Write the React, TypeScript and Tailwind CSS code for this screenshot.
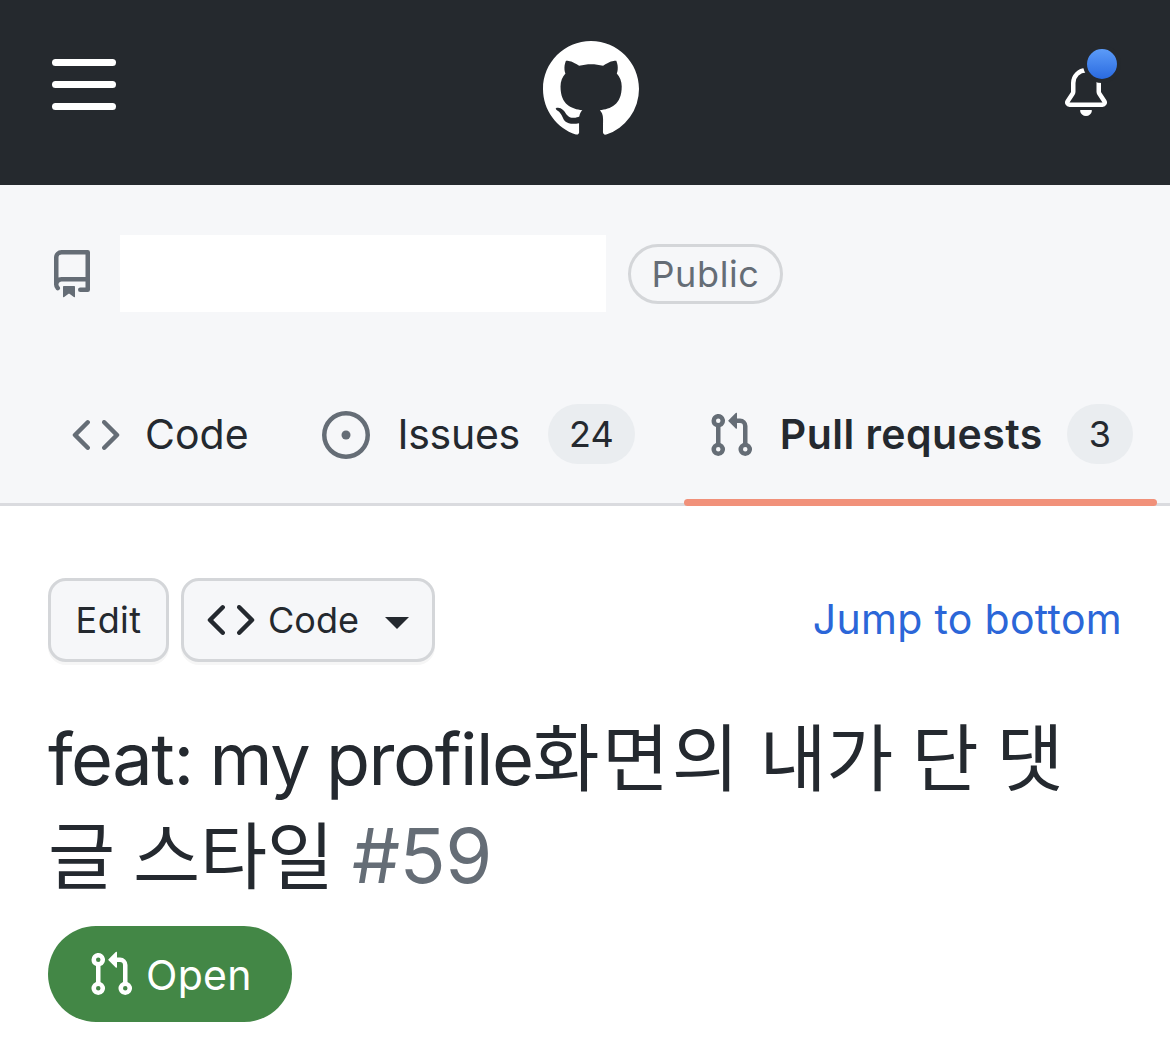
import React from 'react';

const font = { fontFamily: 'Inter, "Noto Sans CJK KR", sans-serif' };

function CodeIcon({ className }: { className: string }) {
  return (
    <svg viewBox="0 0 16 16" fill="currentColor" className={className}>
      <path d="m11.28 3.22 4.25 4.25a.75.75 0 0 1 0 1.06l-4.25 4.25a.749.749 0 0 1-1.275-.326.749.749 0 0 1 .215-.734L13.94 8l-3.72-3.72a.749.749 0 0 1 .326-1.275.749.749 0 0 1 .734.215Zm-6.56 0a.751.751 0 0 1 1.042.018.751.751 0 0 1 .018 1.042L2.06 8l3.72 3.72a.749.749 0 0 1-.326 1.275.749.749 0 0 1-.734-.215L.47 8.53a.75.75 0 0 1 0-1.06Z" />
    </svg>
  );
}

function PullIcon({ className }: { className: string }) {
  return (
    <svg viewBox="0 0 16 16" fill="currentColor" className={className}>
      <path d="M1.5 3.25a2.25 2.25 0 1 1 3 2.122v5.256a2.251 2.251 0 1 1-1.5 0V5.372A2.25 2.25 0 0 1 1.5 3.25Zm5.677-.177L9.573.677A.25.25 0 0 1 10 .854V2.5h1A2.5 2.5 0 0 1 13.5 5v5.628a2.251 2.251 0 1 1-1.5 0V5a1 1 0 0 0-1-1h-1v1.646a.25.25 0 0 1-.427.177L7.177 3.427a.25.25 0 0 1 0-.354ZM3.75 2.5a.75.75 0 1 0 0 1.5.75.75 0 0 0 0-1.5Zm0 9.5a.75.75 0 1 0 0 1.5.75.75 0 0 0 0-1.5Zm8.25.75a.75.75 0 1 0 1.5 0 .75.75 0 0 0-1.5 0Z" />
    </svg>
  );
}

function Header() {
  return (
    <header className="flex h-[185px] items-center justify-between bg-[#25292e] pl-[52px] pr-[60px]">
      <div className="flex w-[64px] flex-col gap-[15px] -mt-[16px]">
        <div className="h-[7px] rounded-full bg-white" />
        <div className="h-[7px] rounded-full bg-white" />
        <div className="h-[7px] rounded-full bg-white" />
      </div>
      <svg viewBox="0 0 16 16" fill="#ffffff" className="h-[96px] w-[96px] -mt-[7px]">
        <path d="M8 0C3.58 0 0 3.58 0 8c0 3.54 2.29 6.53 5.47 7.59.4.07.55-.17.55-.38 0-.19-.01-.82-.01-1.49-2.01.37-2.53-.49-2.69-.94-.09-.23-.48-.94-.82-1.13-.28-.15-.68-.52-.01-.53.63-.01 1.08.58 1.23.82.72 1.21 1.87.87 2.33.66.07-.52.28-.87.51-1.07-1.78-.2-3.64-.89-3.64-3.95 0-.87.31-1.59.82-2.15-.08-.2-.36-1.02.08-2.12 0 0 .67-.21 2.2.82.64-.18 1.32-.27 2-.27.68 0 1.36.09 2 .27 1.53-1.04 2.2-.82 2.2-.82.44 1.1.16 1.92.08 2.12.51.56.82 1.27.82 2.15 0 3.07-1.87 3.75-3.65 3.95.29.25.54.73.54 1.48 0 1.07-.01 1.93-.01 2.2 0 .21.15.46.55.38A8.013 8.013 0 0016 8c0-4.42-3.58-8-8-8z" />
      </svg>
      <div className="relative h-[48px] w-[44px] -mt-[1px]">
        <svg viewBox="0 0 16 16" fill="#ffffff" className="-ml-[4px] h-[48px] w-[48px]">
          <path d="M8 16a2 2 0 0 0 1.985-1.75c.017-.137-.097-.25-.235-.25h-3.5c-.138 0-.252.113-.235.25A2 2 0 0 0 8 16ZM3 5a5 5 0 0 1 10 0v2.947c0 .05.015.098.042.139l1.703 2.555A1.519 1.519 0 0 1 13.482 13H2.518a1.516 1.516 0 0 1-1.263-2.36l1.703-2.554A.255.255 0 0 0 3 7.947Zm5-3.5A3.5 3.5 0 0 0 4.5 5v2.947c0 .346-.102.683-.294.97l-1.703 2.556a.017.017 0 0 0-.003.01l.001.006c0 .002.002.004.004.006l.006.004.007.001h10.964l.007-.001.006-.004.004-.006.001-.007a.017.017 0 0 0-.003-.01l-1.703-2.554a1.745 1.745 0 0 1-.294-.97V5A3.5 3.5 0 0 0 8 1.5Z" />
        </svg>
        <div className="absolute -top-[23px] left-[17px] h-[38px] w-[38px] rounded-full border-4 border-[#25292e] bg-gradient-to-b from-[#5c9bf8] to-[#2a6ae0]" />
      </div>
    </header>
  );
}

function RepoBar() {
  return (
    <div className="border-b-[3px] border-[#dadbdf] bg-[#f6f7f9]">
      <div className="flex items-center pl-[48px] pt-[50px]">
        <svg viewBox="0 0 16 16" fill="currentColor" className="h-[48px] w-[48px] text-[#656d76]">
          <path d="M2 2.5A2.5 2.5 0 0 1 4.5 0h8.75a.75.75 0 0 1 .75.75v12.5a.75.75 0 0 1-.75.75h-2.5a.75.75 0 0 1 0-1.5h1.75v-2h-8a1 1 0 0 0-.714 1.7.75.75 0 1 1-1.072 1.05A2.495 2.495 0 0 1 2 11.5Zm10.5-1h-8a1 1 0 0 0-1 1v6.708A2.486 2.486 0 0 1 4.5 9h8ZM5 12.25a.25.25 0 0 1 .25-.25h3.5a.25.25 0 0 1 .25.25v3.25a.25.25 0 0 1-.4.2l-1.45-1.087a.249.249 0 0 0-.3 0L5.4 15.7a.25.25 0 0 1-.4-.2Z" />
        </svg>
        <div className="ml-[24px] h-[77px] w-[486px] bg-white" />
        <span className="ml-[22px] flex h-[60px] w-[155px] items-center justify-center rounded-full border-[3px] border-[#d4d6d9] text-[36px] tracking-[0.6px] text-[#656d76]">
          Public
        </span>
      </div>
      <nav className="mt-[62px] flex h-[129px] pl-[72px]">
        <div className="flex h-[122px] items-center">
          <CodeIcon className="h-[48px] w-[48px] text-[#656d76]" />
          <span className="ml-[25px] text-[41px] text-[#24292f]">Code</span>
        </div>
        <div className="ml-[73px] flex h-[122px] items-center">
          <svg viewBox="0 0 16 16" fill="currentColor" className="h-[48px] w-[48px] text-[#656d76]">
            <path d="M8 9.5a1.5 1.5 0 1 0 0-3 1.5 1.5 0 0 0 0 3Z" />
            <path d="M8 0a8 8 0 1 1 0 16A8 8 0 0 1 8 0ZM1.5 8a6.5 6.5 0 1 0 13 0 6.5 6.5 0 0 0-13 0Z" />
          </svg>
          <span className="ml-[28px] text-[41px] tracking-[-0.3px] text-[#24292f]">Issues</span>
          <span className="ml-[28px] -mt-[2px] flex h-[60px] w-[87px] items-center justify-center rounded-full bg-[#eaedf0] text-[36px] text-[#24292f]">
            24
          </span>
        </div>
        <div className="relative ml-[72px] flex h-[122px] items-center">
          <PullIcon className="h-[48px] w-[48px] text-[#656d76]" />
          <span className="ml-[25px] text-[41px] font-semibold tracking-[0.45px] text-[#24292f]">Pull requests</span>
          <span className="ml-[24px] -mt-[2px] flex h-[60px] w-[66px] items-center justify-center rounded-full bg-[#eaedf0] text-[36px] text-[#24292f]">
            3
          </span>
          <div className="absolute -left-[23px] -bottom-[10px] h-[7px] w-[473px] rounded-[4px] bg-[#f1917a]" />
        </div>
      </nav>
    </div>
  );
}

function Actions() {
  return (
    <div className="flex items-center justify-between pl-[48px] pr-[48px] pt-[72px]">
      <div className="flex gap-[12px]">
        <button className="flex h-[84px] w-[121px] items-center justify-center rounded-[18px] border-[3px] border-[#d4d6d9] bg-[#f6f7f9] text-[36px] tracking-[0.4px] text-[#24292f] shadow-[0_3px_0_rgba(27,31,36,0.04)]">
          Edit
        </button>
        <button className="flex h-[84px] w-[254px] items-center rounded-[18px] border-[3px] border-[#d4d6d9] bg-[#f6f7f9] pl-[23px] text-[36px] text-[#24292f] shadow-[0_3px_0_rgba(27,31,36,0.04)]">
          <CodeIcon className="h-[48px] w-[48px]" />
          <span className="ml-[13px]">Code</span>
          <span className="ml-[26px] mt-[6px] h-0 w-0 border-x-[12px] border-t-[12px] border-x-transparent border-t-[#24292f]" />
        </button>
      </div>
      <a className="text-[41px] tracking-[0.3px] text-[#2b66d8]">Jump to bottom</a>
    </div>
  );
}

export default function App() {
  return (
    <div className="min-h-[1041px] overflow-hidden bg-white" style={font}>
      <Header />
      <RepoBar />
      <Actions />
      <div className="px-[48px]">
        <h1 className="mt-[48px] text-[73px] font-normal leading-[97px] tracking-[-0.3px] text-[#24292f] [word-spacing:-2px]">
          <span className="text-[72px] tracking-[-1.44px]">feat: my profile</span>
          <span className="tracking-[2.4px]">화면의</span> 내가 단 댓글 스타일{' '}
          <span className="text-[76px] tracking-[-0.5px] text-[#656d76]">#59</span>
        </h1>
        <div className="mt-[21px] flex h-[96px] w-[244px] items-center rounded-full bg-[#438746] pl-[39px] text-white">
          <PullIcon className="h-[48px] w-[48px]" />
          <span className="ml-[11px] mt-[3px] text-[41px] tracking-[0.3px]">Open</span>
        </div>
      </div>
    </div>
  );
}
